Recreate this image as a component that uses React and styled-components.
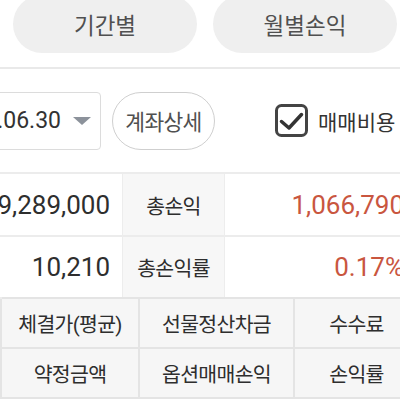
import React from "react";
import styled, { createGlobalStyle } from "styled-components";

const Global = createGlobalStyle`
  html, body {
    margin: 0;
    padding: 0;
    background: #ffffff;
    overflow: hidden;
  }
  body {
    font-family: "Roboto", "Noto Sans CJK KR", sans-serif;
    color: #333;
  }
`;

const Page = styled.div`
  width: 400px;
  height: 400px;
  overflow: hidden;
  background: #fff;
`;

const TabBar = styled.div`
  display: flex;
  gap: 16px;
  padding-left: 13px;
  margin-top: -5px;
`;

const Tab = styled.div`
  flex: 0 0 184px;
  height: 58px;
  border-radius: 29px;
  background: #efefef;
  color: #505050;
  font-size: 22.5px;
  display: flex;
  align-items: center;
  justify-content: center;
`;

const Divider = styled.div`
  margin-top: 14px;
  height: 2px;
  background: #e9e9e9;
`;

const Controls = styled.div`
  height: 103px;
  display: flex;
  align-items: center;
`;

const DateSelect = styled.div`
  flex: 0 0 auto;
  margin-left: -60px;
  width: 161px;
  height: 58px;
  box-sizing: border-box;
  border: 1.5px solid #dcdcdc;
  border-radius: 4px;
  display: flex;
  align-items: center;
  justify-content: flex-end;
  gap: 12px;
  padding-right: 9px;
  font-size: 23px;
  color: #333;
  white-space: nowrap;
`;

const Caret = styled.svg`
  width: 18px;
  height: 8px;
  flex: 0 0 auto;
`;

const DetailButton = styled.div`
  margin-left: 11px;
  width: 103px;
  height: 58px;
  box-sizing: border-box;
  border: 1.5px solid #cfcfcf;
  border-radius: 29px;
  display: flex;
  align-items: center;
  justify-content: center;
  font-size: 21.5px;
  color: #505050;
  letter-spacing: -0.7px;
`;

const CheckLabel = styled.label`
  margin-left: 60px;
  display: flex;
  align-items: center;
  gap: 10px;
  font-size: 21px;
  color: #333;
  white-space: nowrap;
`;

const CheckBox = styled.svg`
  width: 33px;
  height: 33px;
  flex: 0 0 auto;
`;

const Summary = styled.div`
  width: 412px;
  display: grid;
  grid-template-columns: 122px 103px 1fr;
  grid-template-rows: 63px 62px;
  border-top: 2px solid #ececec;
`;

const SummaryCell = styled.div`
  display: flex;
  align-items: center;
  justify-content: ${(p) => (p.$kind === "label" ? "center" : "flex-end")};
  padding-right: ${(p) => (p.$kind === "value" ? "12px" : p.$kind === "profit" ? "8px" : "0")};
  background: ${(p) => (p.$kind === "label" ? "#f7f7f7" : "#fff")};
  border-bottom: 2px solid #ececec;
  border-left: ${(p) => (p.$kind === "label" ? "1.5px solid #ededed" : "none")};
  border-right: ${(p) => (p.$kind === "label" ? "1.5px solid #ededed" : "none")};
  font-size: ${(p) => (p.$kind === "label" ? "20.5px" : "26px")};
  letter-spacing: ${(p) => (p.$kind === "label" ? "-0.7px" : "0")};
  color: ${(p) => (p.$kind === "profit" ? "#c9563f" : "#2e2e2e")};
  white-space: nowrap;
`;

const Detail = styled.div`
  width: 418px;
  display: grid;
  grid-template-columns: 138px 155px 125px;
  grid-auto-rows: 50px;
  border-left: 2px solid #e4e4e4;
  border-bottom: 2px solid #e4e4e4;
  margin-top: -2px;
`;

const DetailCell = styled.div`
  display: flex;
  align-items: center;
  justify-content: center;
  background: #f6f6f6;
  border-top: 2px solid #e4e4e4;
  border-right: 2px solid #e4e4e4;
  font-size: 20.5px;
  letter-spacing: -0.7px;
  color: #2e2e2e;
  white-space: nowrap;
`;

export default function App() {
  return (
    <Page>
      <Global />
      <TabBar>
        <Tab>기간별</Tab>
        <Tab>월별손익</Tab>
      </TabBar>
      <Divider />
      <Controls>
        <DateSelect>
          <span>2023.06.30</span>
          <Caret viewBox="0 0 18 8">
            <path d="M0 0 L18 0 L9 8 Z" fill="#8c929b" />
          </Caret>
        </DateSelect>
        <DetailButton>계좌상세</DetailButton>
        <CheckLabel>
          <CheckBox viewBox="0 0 33 33">
            <rect x="1.5" y="1.5" width="30" height="30" rx="5" fill="none" stroke="#444" strokeWidth="3" />
            <path d="M6.5 17.5 L14 24 L26.5 10.5" fill="none" stroke="#333" strokeWidth="3.5" strokeLinecap="round" strokeLinejoin="round" />
          </CheckBox>
          매매비용
        </CheckLabel>
      </Controls>
      <Summary>
        <SummaryCell $kind="value">9,289,000</SummaryCell>
        <SummaryCell $kind="label">총손익</SummaryCell>
        <SummaryCell $kind="profit">1,066,790</SummaryCell>
        <SummaryCell $kind="value">10,210</SummaryCell>
        <SummaryCell $kind="label">총손익률</SummaryCell>
        <SummaryCell $kind="profit">0.17%</SummaryCell>
      </Summary>
      <Detail>
        <DetailCell>체결가(평균)</DetailCell>
        <DetailCell>선물정산차금</DetailCell>
        <DetailCell>수수료</DetailCell>
        <DetailCell>약정금액</DetailCell>
        <DetailCell>옵션매매손익</DetailCell>
        <DetailCell>손익률</DetailCell>
      </Detail>
    </Page>
  );
}
